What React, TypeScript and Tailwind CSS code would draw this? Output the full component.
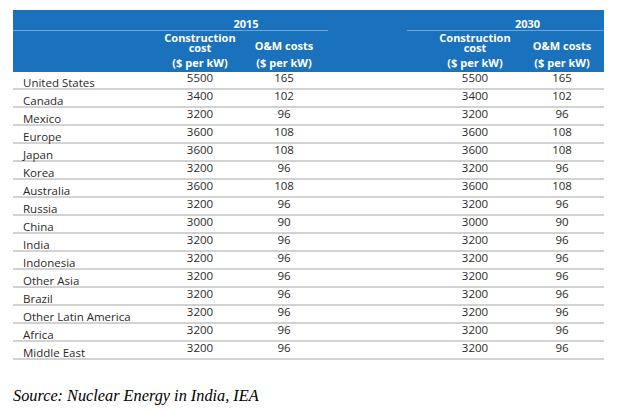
const rows: [string, number, number][] = [
  ["United States", 5500, 165],
  ["Canada", 3400, 102],
  ["Mexico", 3200, 96],
  ["Europe", 3600, 108],
  ["Japan", 3600, 108],
  ["Korea", 3200, 96],
  ["Australia", 3600, 108],
  ["Russia", 3200, 96],
  ["China", 3000, 90],
  ["India", 3200, 96],
  ["Indonesia", 3200, 96],
  ["Other Asia", 3200, 96],
  ["Brazil", 3200, 96],
  ["Other Latin America", 3200, 96],
  ["Africa", 3200, 96],
  ["Middle East", 3200, 96],
];

const cols = "grid grid-cols-[147px_80px_88px_79px_23px_90px_84px]";

function CostHead({ w }: { w: string }) {
  return (
    <div className={`flex flex-col ${w}`}>
      <div className="flex h-[22px] flex-col items-center leading-[10px]">
        <span>Construction</span>
        <span>cost</span>
      </div>
      <div className="pt-[2px] text-center leading-[12px]">($ per kW)</div>
    </div>
  );
}

function OmHead({ w }: { w: string }) {
  return (
    <div className={`flex flex-col ${w}`}>
      <div className="flex h-[22px] items-center justify-center pt-[3px] leading-[12px]">O&amp;M costs</div>
      <div className="pt-[2px] text-center leading-[12px]">($ per kW)</div>
    </div>
  );
}

export default function App() {
  return (
    <div className="h-[412px] w-[628px] bg-white pt-[10px] pl-[13px] font-['Open_Sans',sans-serif]">
      <div className="w-[591px]">
        <div className="bg-[#1a72bd] text-[11px] font-bold text-white">
          <div className={`${cols} h-[20px]`}>
            <div className="border-b border-[#6fa6d6]" />
            <div className="col-span-2 border-b border-[#6fa6d6] pt-[8px] pl-[4px] text-center leading-[12px]">
              2015
            </div>
            <div />
            <div className="col-span-3 border-b border-[#6fa6d6] pt-[8px] pl-[44px] text-center leading-[12px]">
              2030
            </div>
          </div>
          <div className={`${cols} h-[42px] pt-[3px]`}>
            <div />
            <CostHead w="w-[80px]" />
            <OmHead w="w-[88px]" />
            <div className="col-span-2" />
            <CostHead w="w-[90px]" />
            <OmHead w="w-[84px]" />
          </div>
        </div>
        <div className="text-[11.5px] font-medium text-[#2a2a2a]">
          {rows.map(([name, c, o]) => (
            <div key={name} className={`${cols} h-[18px] border-b-2 border-[#d2d2d2]`}>
              <div className="pt-[5px] pl-[10px] leading-[12px]">{name}</div>
              <div className="text-center leading-[12px]">{c}</div>
              <div className="text-center leading-[12px]">{o}</div>
              <div className="col-span-2" />
              <div className="text-center leading-[12px]">{c}</div>
              <div className="text-center leading-[12px]">{o}</div>
            </div>
          ))}
        </div>
      </div>
      <p className="mt-[27px] font-['Liberation_Serif',serif] text-[16.3px] leading-[18px] text-black italic">
        Source: Nuclear Energy in India, IEA
      </p>
    </div>
  );
}
